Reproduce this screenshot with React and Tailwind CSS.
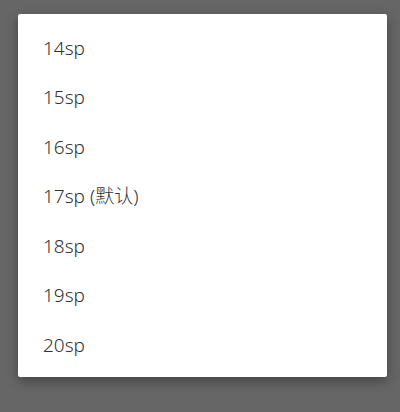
const sizes = ["14sp", "15sp", "16sp", "17sp (默认)", "18sp", "19sp", "20sp"];

export default function App() {
  return (
    <div className="w-[400px] h-[412px] bg-[#666666] pt-[14px] pl-[18px]" style={{ fontFamily: '"Noto Sans", "Noto Sans CJK SC", sans-serif' }}>
      <div className="w-[369px] h-[363px] bg-white rounded-[2px] shadow-[0_4px_12px_rgba(0,0,0,0.35)] pt-[9px]">
        {sizes.map(s => (
          <div key={s} className="h-[49.5px] flex items-center pl-[25px] text-[19px] font-light text-[#333333]">
            {s}
          </div>
        ))}
      </div>
    </div>
  );
}
